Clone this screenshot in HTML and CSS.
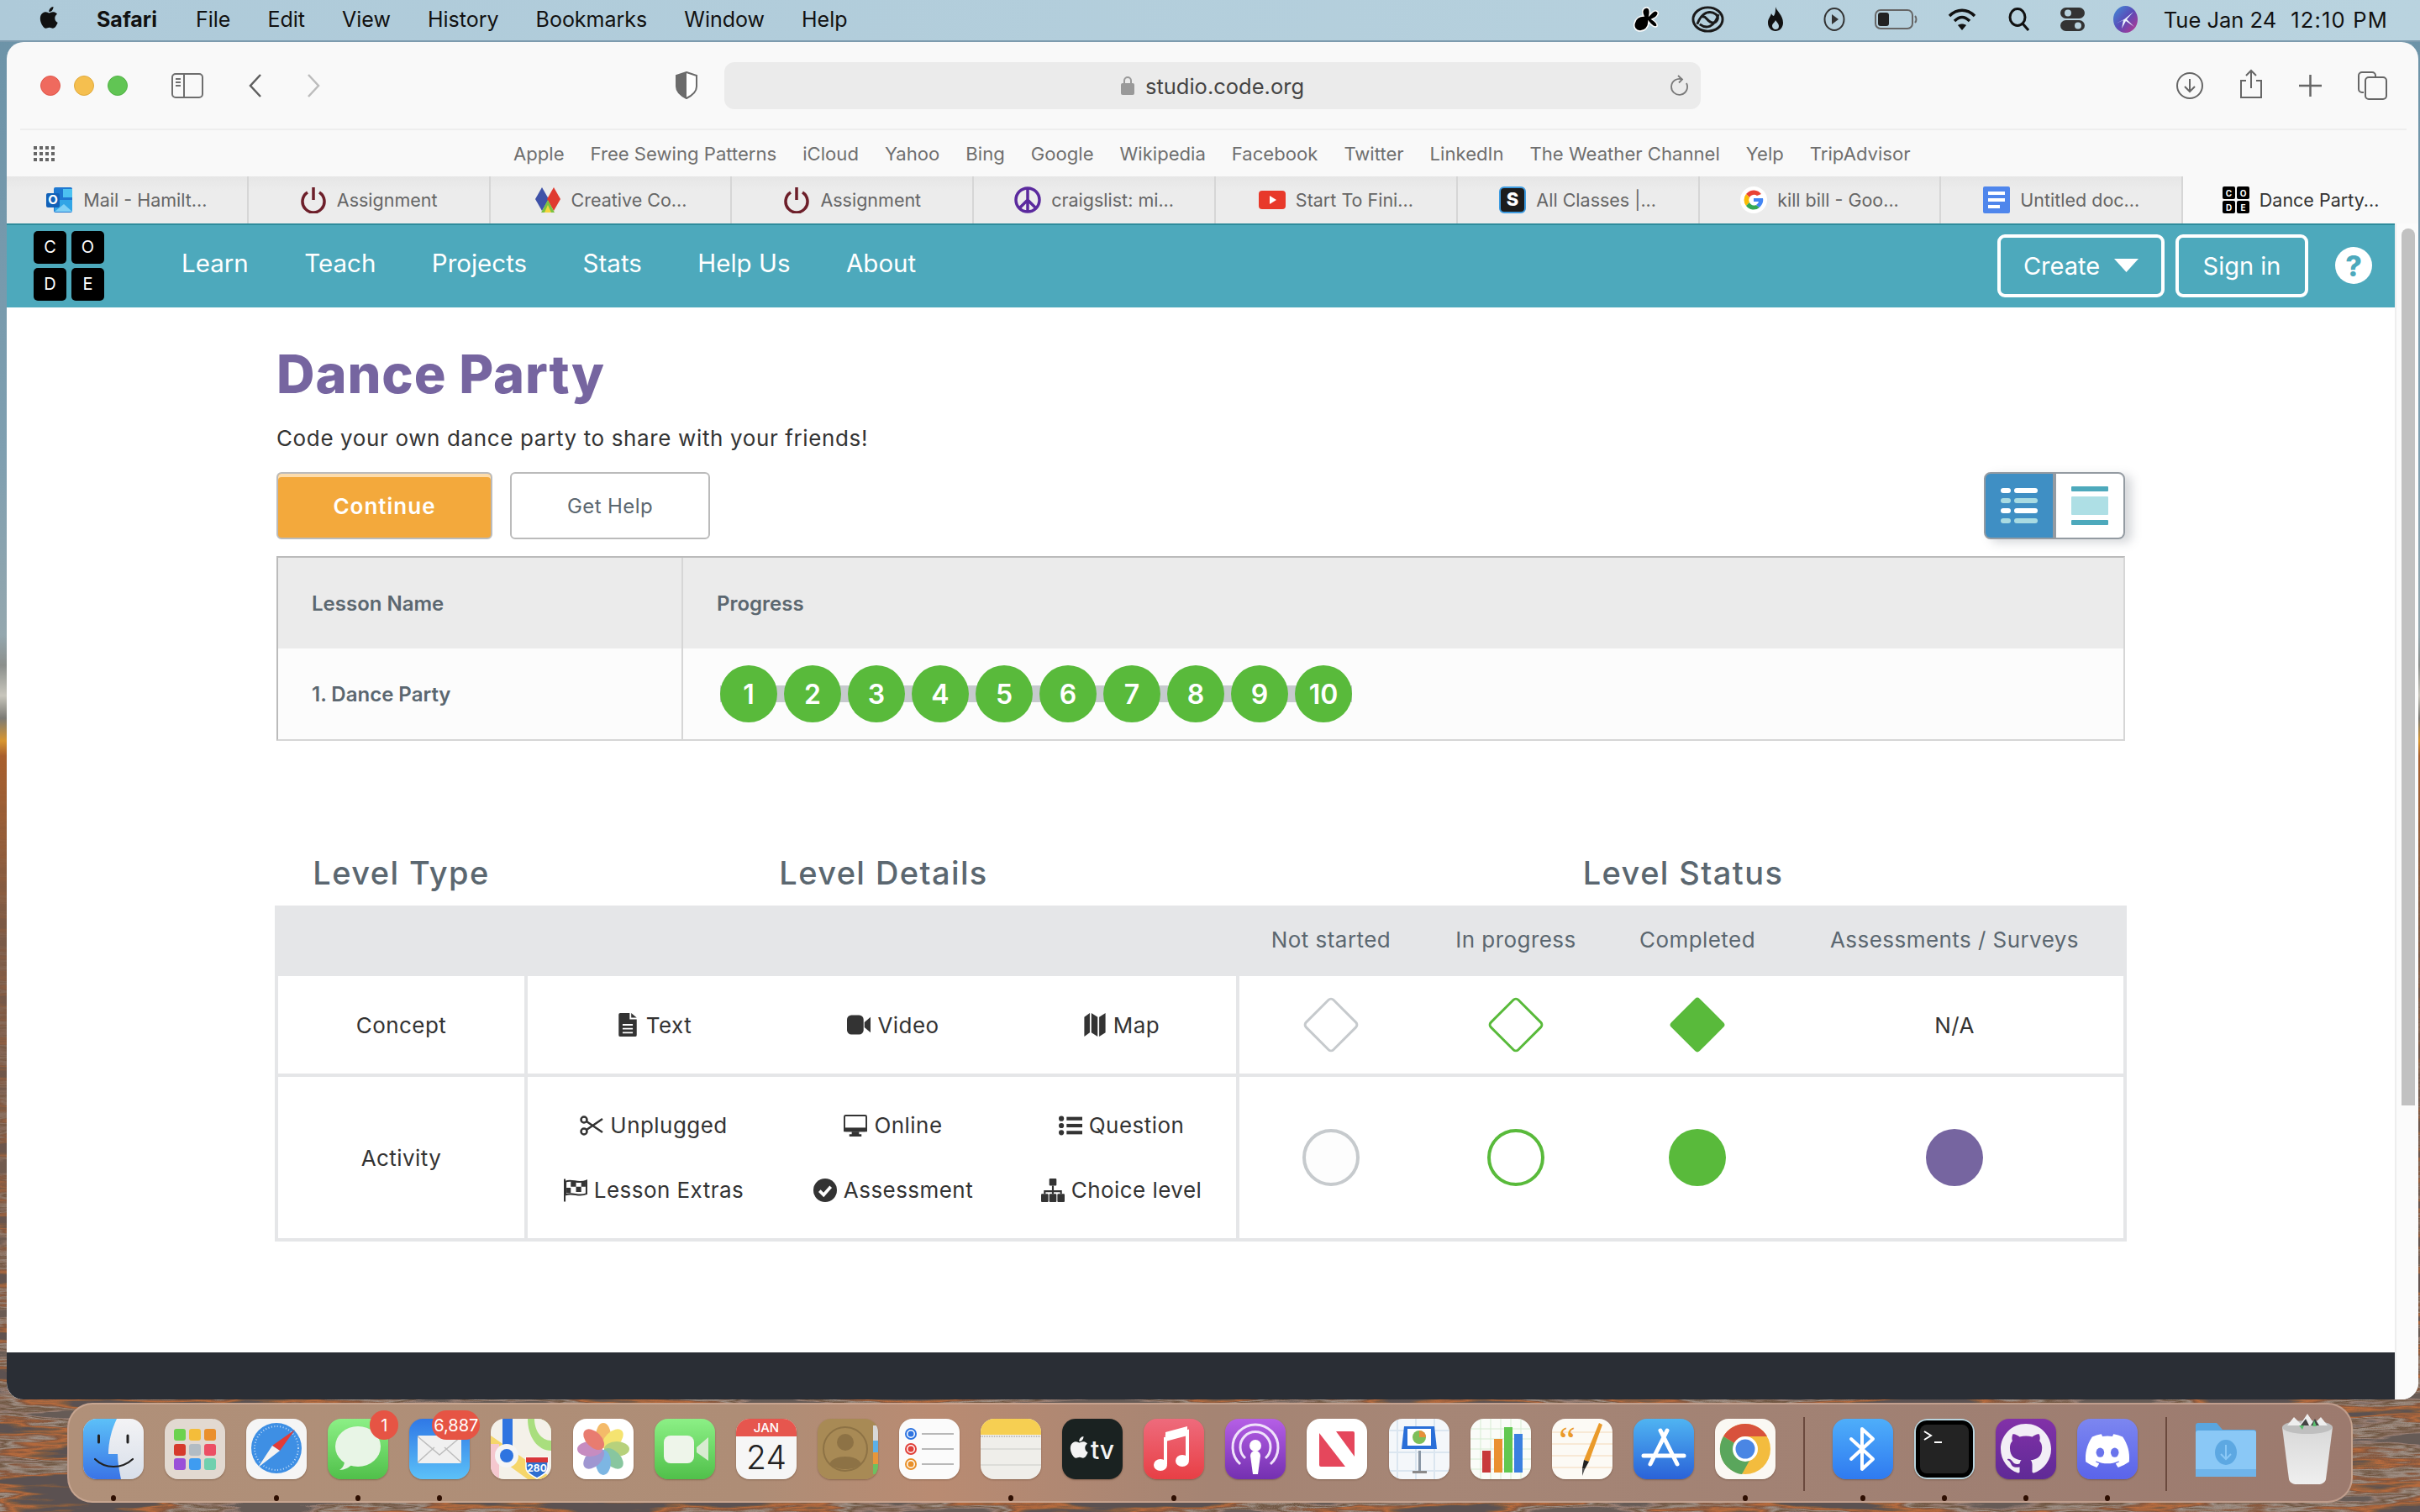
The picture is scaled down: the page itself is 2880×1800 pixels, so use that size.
FILE: index.html
```html
<!DOCTYPE html>
<html lang="en">
<head>
<meta charset="utf-8">
<title>Dance Party</title>
<link rel="stylesheet" href="styles.css">
</head>
<body>
<div class="desktop">
<svg class="wallpaper" width="2880" height="1800" aria-hidden="true">
  <defs>
    <filter id="rock" x="0" y="0" width="100%" height="100%" color-interpolation-filters="sRGB">
      <feTurbulence type="fractalNoise" baseFrequency="0.005 0.045" numOctaves="5" seed="11"/>
      <feColorMatrix type="matrix" values="3 0 0 0 -1  3 0 0 0 -1  3 0 0 0 -1  0 0 0 0 1"/>
      <feComponentTransfer>
        <feFuncR type="table" tableValues=".36 .50 .72 .52 .62 .44 .60 .40"/>
        <feFuncG type="table" tableValues=".32 .36 .42 .34 .56 .34 .50 .36"/>
        <feFuncB type="table" tableValues=".32 .26 .24 .24 .52 .26 .46 .34"/>
      </feComponentTransfer>
    </filter>
    <linearGradient id="sky" x1="0" y1="0" x2="0" y2="1">
      <stop offset="0" stop-color="#6b92a7"/><stop offset=".3" stop-color="#7f9fb0"/>
      <stop offset=".42" stop-color="#94a7ae"/><stop offset=".44" stop-color="#8b8f8c"/>
      <stop offset=".46" stop-color="#c8c6bc"/><stop offset=".475" stop-color="#7b7a74"/>
      <stop offset=".49" stop-color="#d8952f"/><stop offset=".5" stop-color="#a85f2d"/>
      <stop offset=".62" stop-color="#7d5a45" stop-opacity=".85"/><stop offset=".8" stop-color="#7d5a45" stop-opacity=".4"/>
      <stop offset=".93" stop-color="#7d5a45" stop-opacity="0"/>
    </linearGradient>
    <linearGradient id="gFinder" x1="0" y1="0" x2="0" y2="1"><stop offset="0" stop-color="#5cc0f8"/><stop offset="1" stop-color="#3a74e6"/></linearGradient>
    <linearGradient id="gFinderR" x1="0" y1="0" x2="0" y2="1"><stop offset="0" stop-color="#f3f3f5"/><stop offset="1" stop-color="#d8dfea"/></linearGradient>
    <linearGradient id="gGreen" x1="0" y1="0" x2="0" y2="1"><stop offset="0" stop-color="#8cf086"/><stop offset="1" stop-color="#50c04a"/></linearGradient>
    <linearGradient id="gMail" x1="0" y1="0" x2="0" y2="1"><stop offset="0" stop-color="#2f78e6"/><stop offset="1" stop-color="#5cc1f8"/></linearGradient>
    <linearGradient id="gMusic" x1="0" y1="0" x2="0" y2="1"><stop offset="0" stop-color="#ee6b7c"/><stop offset="1" stop-color="#e83f45"/></linearGradient>
    <linearGradient id="gPod" x1="0" y1="0" x2="0" y2="1"><stop offset="0" stop-color="#b55fe6"/><stop offset="1" stop-color="#7430b0"/></linearGradient>
    <linearGradient id="gApp" x1="0" y1="0" x2="0" y2="1"><stop offset="0" stop-color="#4fb4f2"/><stop offset="1" stop-color="#2a62d8"/></linearGradient>
    <linearGradient id="gBt" x1="0" y1="0" x2="0" y2="1"><stop offset="0" stop-color="#4eaefa"/><stop offset="1" stop-color="#2f7af0"/></linearGradient>
    <linearGradient id="gGit" x1="0" y1="0" x2="0" y2="1"><stop offset="0" stop-color="#8231a8"/><stop offset="1" stop-color="#5f2a96"/></linearGradient>
    <linearGradient id="gDisc" x1="0" y1="0" x2="0" y2="1"><stop offset="0" stop-color="#7c86f0"/><stop offset="1" stop-color="#5a64ea"/></linearGradient>
    <linearGradient id="gTrash" x1="0" y1="0" x2="0" y2="1"><stop offset="0" stop-color="#d8d8d8"/><stop offset="1" stop-color="#efefef"/></linearGradient>
    <linearGradient id="gSiri" x1="0" y1="0" x2="1" y2="1"><stop offset="0" stop-color="#3f8fd8"/><stop offset=".5" stop-color="#5a4bb8"/><stop offset="1" stop-color="#c0348c"/></linearGradient>
  </defs>
  <rect width="2880" height="1800" filter="url(#rock)"/>
  <rect width="2880" height="1800" fill="url(#sky)"/>
</svg>

<header class="menubar">
  <svg class="apple" viewBox="0 0 24 24"><path d="M17.05 12.54c-.03-2.6 2.12-3.85 2.22-3.91-1.21-1.77-3.09-2.01-3.76-2.04-1.6-.16-3.12.94-3.93.94-.81 0-2.06-.92-3.39-.89-1.74.03-3.35 1.01-4.25 2.57-1.81 3.14-.46 7.8 1.3 10.35.86 1.25 1.89 2.65 3.24 2.6 1.3-.05 1.79-.84 3.36-.84 1.57 0 2.01.84 3.38.81 1.4-.02 2.28-1.27 3.14-2.52.99-1.45 1.4-2.85 1.42-2.92-.03-.01-2.72-1.04-2.73-4.15zM14.5 4.9c.72-.87 1.2-2.08 1.07-3.28-1.03.04-2.28.69-3.02 1.55-.66.77-1.24 2-1.09 3.18 1.15.09 2.32-.58 3.04-1.45z"/></svg>
  <nav class="menus">
    <span class="menu-app">Safari</span><span>File</span><span>Edit</span><span>View</span><span>History</span><span>Bookmarks</span><span>Window</span><span>Help</span>
  </nav>
  <div class="status">
    <svg class="st st-splash" viewBox="0 0 33 30"><path d="M15 1c4-1 5 4 4 9 2-2 5-6 8-5 4 1 2 5 0 7-1 1-3 2-5 3 3 2 7 5 6 8-2 3-7-1-10-5 0 6-4 11-10 11-6 0-8-5-7-9 1-6 6-9 11-9-2-4-2-9 3-10z" fill="#000" stroke="#fff" stroke-width="1.500"/></svg>
    <svg class="st st-cc" viewBox="0 0 40 32" fill="none" stroke="#1a1a1a" stroke-width="3"><ellipse cx="20" cy="16" rx="18" ry="14.500"/><path d="M7 22C12 8 22 4 30 10c5 5 0 11-5 10-6-1-7-9-12-7M33 10C28 26 18 28 10 22"/></svg>
    <svg class="st st-flame" viewBox="0 0 22 30"><path fill="#111" d="M11 0c1 5 9 10 9 19 0 6-4 10-9 10s-9-4-9-10c0-5 3-7 4-11 1 2 2 3 3 3 2-3 2-7 2-11z"/><path d="M11 16c1 2 4 4 4 7 0 3-2 4-4 4s-4-2-4-4c0-3 3-4 4-7z" fill="#b7d1dd"/></svg>
    <svg class="st st-play" viewBox="0 0 26 30" fill="none"><ellipse cx="13" cy="15" rx="11.500" ry="13" stroke="#333" stroke-width="2"/><path d="M10 9l8 6-8 6z" fill="#333"/></svg>
    <svg class="st st-batt" viewBox="0 0 51 26" fill="none"><rect x="1" y="2" width="44" height="22" rx="6" stroke="#666" stroke-width="2"/><rect x="4" y="5" width="13" height="16" rx="3" fill="#222"/><path d="M48 9c2 2 2 6 0 8" stroke="#666" stroke-width="2"/></svg>
    <svg class="st st-wifi" viewBox="0 0 34 26" fill="none" stroke="#111" stroke-width="3.500"><path d="M2 9c9-9 21-9 30 0M8 15c6-6 12-6 18 0"/><path d="M17 26l-5-6c3-2 7-2 10 0z" fill="#111" stroke="none"/></svg>
    <svg class="st st-search" viewBox="0 0 25 28" fill="none" stroke="#111" stroke-width="3"><ellipse cx="11" cy="11.500" rx="9" ry="10"/><path d="M17 19l7 8"/></svg>
    <svg class="st st-ctrl" viewBox="0 0 29 28"><rect width="29" height="13" rx="6.500" fill="#333"/><circle cx="9" cy="6.500" r="4" fill="#b7d1dd"/><rect y="15" width="29" height="13" rx="6.500" fill="#333"/><circle cx="21" cy="21.500" r="4" fill="#b7d1dd"/></svg>
    <svg class="st st-siri" viewBox="0 0 29 32"><ellipse cx="14.500" cy="16" rx="14.500" ry="16" fill="url(#gSiri)"/><path d="M3 21L13 16 24 7 16 16 25 25 15 18 10 27 12 17z" fill="#eef5ff"/></svg>
    <span class="clock-date">Tue Jan 24</span><span class="clock-time">12:10 PM</span>
  </div>
</header>

<main class="window">
  <div class="toolbar">
    <span class="light light-r"></span><span class="light light-y"></span><span class="light light-g"></span>
    <svg class="tb tb-side" viewBox="0 0 38 30" fill="none" stroke="#6e6e6e" stroke-width="2"><rect x="1" y="1" width="36" height="28" rx="4"/><path d="M15 1v28M5 7h6M5 11h6M5 15h6"/></svg>
    <svg class="tb tb-back" viewBox="0 0 17 28" fill="none" stroke="#5f5f5f" stroke-width="2.500"><path d="M15 1L3 14l12 13"/></svg>
    <svg class="tb tb-fwd" viewBox="0 0 17 28" fill="none" stroke="#bcbcbc" stroke-width="2.500"><path d="M2 1l12 13L2 27"/></svg>
    <svg class="tb tb-shield" viewBox="0 0 28 33"><path d="M14 1l12 4v13c0 7-6 11-12 14C8 29 2 25 2 18V5z" fill="#fff" stroke="#6b6b6b" stroke-width="2"/><path d="M14 1v31C8 29 2 25 2 18V5z" fill="#6b6b6b"/></svg>
    <div class="urlbar">
      <svg class="lock" viewBox="0 0 16 23"><path d="M4 10V6a4 4 0 018 0v4" fill="none" stroke="#999" stroke-width="2"/><rect y="9" width="16" height="14" rx="2" fill="#999"/></svg>
      <span class="url-text">studio.code.org</span>
      <svg class="reload" viewBox="0 0 22 25" fill="none" stroke="#7a7a7a" stroke-width="1.800"><path d="M14 5.500A9.500 9.500 0 1019 10"/><path d="M9 1l5 4.500-4 4"/></svg>
    </div>
    <svg class="tb tb-dl" viewBox="0 0 32 32" fill="none" stroke="#666" stroke-width="2"><circle cx="16" cy="16" r="15"/><path d="M16 8v15M10 17l6 6 6-6"/></svg>
    <svg class="tb tb-share" viewBox="0 0 28 36" fill="none" stroke="#666" stroke-width="2"><path d="M8 14H2v20h24V14h-6M14 23V2M8 8l6-6 6 6"/></svg>
    <svg class="tb tb-plus" viewBox="0 0 27 26" fill="none" stroke="#666" stroke-width="2.500"><path d="M13.500 0v26M0 13h27"/></svg>
    <svg class="tb tb-tabs" viewBox="0 0 35 34" fill="none" stroke="#666" stroke-width="2"><path d="M7 25H5a4 4 0 01-4-4V5a4 4 0 014-4h12a4 4 0 014 4v2"/><rect x="9" y="7" width="25" height="26" rx="4"/></svg>
  </div>
  <div class="bookmarks">
    <svg class="grid-ico" viewBox="0 0 26 18" fill="#666"><g id="gr"><rect width="4" height="4"/><rect x="7" width="4" height="4"/><rect x="14" width="4" height="4"/><rect x="21" width="4" height="4"/></g><use href="#gr" y="7"/><use href="#gr" y="14"/></svg>
    <a>Apple</a><a>Free Sewing Patterns</a><a>iCloud</a><a>Yahoo</a><a>Bing</a><a>Google</a><a>Wikipedia</a><a>Facebook</a><a>Twitter</a><a>LinkedIn</a><a>The Weather Channel</a><a>Yelp</a><a>TripAdvisor</a>
  </div>
  <div class="tabs">
    <div class="tab"><svg class="tab-ico" viewBox="0 0 32 32"><rect x="9" y="1" width="22" height="30" rx="2" fill="#1f78d1"/><rect x="20" y="3" width="11" height="10" fill="#4cc2f1"/><path d="M10 16h21v14H10z" fill="#31a5e6"/><path d="M10 30l11-9 10 9z" fill="#7fd0f5"/><rect y="8" width="16" height="17" rx="2" fill="#1261b8"/><text x="8" y="21" class="tab-o">O</text></svg><span>Mail - Hamilt...</span></div>
    <div class="tab"><svg class="tab-ico" viewBox="0 0 32 32" fill="none" stroke="#6d1f2a" stroke-width="3.500"><path d="M9 7a13 13 0 1014 0"/><path d="M16 1v15"/></svg><span>Assignment</span></div>
    <div class="tab"><svg class="tab-ico" viewBox="0 0 32 32"><path d="M9 1l8 14-8 14L1 15z" fill="#3f52a8"/><path d="M23 1l8 14-8 14-8-14z" fill="#e03a30"/><path d="M16 16l8 15H8z" fill="#7cc242"/><path d="M16 22l4 9h-8z" fill="#f6d53c"/></svg><span>Creative Co...</span></div>
    <div class="tab"><svg class="tab-ico" viewBox="0 0 32 32" fill="none" stroke="#6d1f2a" stroke-width="3.500"><path d="M9 7a13 13 0 1014 0"/><path d="M16 1v15"/></svg><span>Assignment</span></div>
    <div class="tab"><svg class="tab-ico" viewBox="0 0 32 32" fill="none" stroke="#5b2a9e" stroke-width="3.500"><circle cx="16" cy="16" r="14"/><path d="M16 2v28M16 16L6 26M16 16l10 10"/></svg><span>craigslist: mi...</span></div>
    <div class="tab"><svg class="tab-ico" viewBox="0 0 32 32"><rect y="5" width="32" height="22" rx="4" fill="#e8392a"/><path d="M13 11l8 5-8 5z" fill="#fff"/></svg><span>Start To Fini...</span></div>
    <div class="tab"><svg class="tab-ico" viewBox="0 0 32 32"><rect x="1" y="1" width="30" height="30" rx="5" fill="#1c1c1c" stroke="#3d9be0" stroke-width="2"/><text x="16" y="23" class="tab-s">S</text></svg><span>All Classes |...</span></div>
    <div class="tab"><svg class="tab-ico" viewBox="0 0 32 32"><circle cx="16" cy="16" r="16" fill="#fff"/><path d="M25 9a11 11 0 00-17-1l-1 1 4 4a6 6 0 019-2z" fill="#e94335"/><path d="M7 9a11 11 0 000 14l4-4a6 6 0 010-6z" fill="#fbbc05"/><path d="M7 23a11 11 0 0016 2l-4-3a6 6 0 01-8-3z" fill="#34a853"/><path d="M27 14H16v4h6a6 6 0 01-3 4l4 3c3-3 5-7 4-11z" fill="#4285f4"/></svg><span>kill bill - Goo...</span></div>
    <div class="tab"><svg class="tab-ico" viewBox="0 0 32 32"><rect width="32" height="32" rx="2" fill="#4f86ec"/><rect x="6" y="6" width="20" height="4" fill="#fff"/><rect x="6" y="14" width="20" height="4" fill="#fff"/><rect x="6" y="22" width="14" height="4" fill="#fff"/></svg><span>Untitled doc...</span></div>
    <div class="tab tab-active"><svg class="tab-ico" viewBox="0 0 32 32"><rect width="15" height="15" rx="2"/><rect x="17" width="15" height="15" rx="2"/><rect y="17" width="15" height="15" rx="2"/><rect x="17" y="17" width="15" height="15" rx="2"/><text x="7.500" y="12" class="tab-c">C</text><text x="24.500" y="12" class="tab-c">O</text><text x="7.500" y="29" class="tab-c">D</text><text x="24.500" y="29" class="tab-c">E</text></svg><span>Dance Party...</span></div>
  </div>

  <div class="viewport">
    <div class="site">
      <div class="site-header">
        <div class="logo"><span>C</span><span>O</span><span>D</span><span>E</span></div>
        <nav class="site-nav"><a>Learn</a><a>Teach</a><a>Projects</a><a>Stats</a><a>Help Us</a><a>About</a></nav>
        <button class="hbtn hbtn-create">Create<svg class="caret" viewBox="0 0 29 16"><path d="M0 0h29L14.500 16z" fill="#fff"/></svg></button>
        <button class="hbtn hbtn-sign">Sign in</button>
        <div class="help">?</div>
      </div>
      <div class="site-body">
        <h1 class="title">Dance Party</h1>
        <p class="lead">Code your own dance party to share with your friends!</p>
        <div class="actions">
          <button class="btn btn-primary">Continue</button>
          <button class="btn btn-secondary">Get Help</button>
          <div class="toggle">
            <div class="toggle-a">
              <i class="d w"></i><i class="l w"></i><i class="d t"></i><i class="l t"></i><i class="d w"></i><i class="l w"></i><i class="d t"></i><i class="l t"></i>
            </div>
            <div class="toggle-b"><i class="bar"></i><i class="box"></i><i class="bar"></i></div>
          </div>
        </div>
        <div class="lessons">
          <div class="cell cell-head cell-name">Lesson Name</div>
          <div class="cell cell-head cell-prog">Progress</div>
          <div class="cell cell-row cell-name">1. Dance Party</div>
          <div class="cell cell-row cell-prog">
            <div class="bubbles"><span>1</span><span>2</span><span>3</span><span>4</span><span>5</span><span>6</span><span>7</span><span>8</span><span>9</span><span>10</span></div>
          </div>
        </div>
        <div class="legend-titles"><h2>Level Type</h2><h2>Level Details</h2><h2>Level Status</h2></div>
        <div class="legend">
          <div class="lg-head">
            <div class="status-grid lg-status-head"><span>Not started</span><span>In progress</span><span>Completed</span><span>Assessments / Surveys</span></div>
          </div>
          <div class="lg-cell">Concept</div>
          <div class="lg-cell details">
            <div class="item"><svg class="fa" viewBox="0 0 23 30"><path d="M0 2a2 2 0 012-2h12v8h9v20a2 2 0 01-2 2H2a2 2 0 01-2-2zM16 0l7 6h-7z" fill="#333"/><path d="M5 14h13v2H5zM5 19h13v2H5zM5 24h13v2H5z" fill="#fff"/></svg>Text</div>
            <div class="item"><svg class="fa" viewBox="0 0 27 24"><rect y="1" width="19" height="22" rx="5" fill="#333"/><path d="M20 9l7-6v18l-7-6z" fill="#333"/></svg>Video</div>
            <div class="item"><svg class="fa" viewBox="0 0 27 30"><path d="M0 5l7-5v25l-7 5zM9 0l8 5v25l-8-5zM19 5l8-5v25l-8 5z" fill="#333"/></svg>Map</div>
          </div>
          <div class="status-grid">
            <svg class="mark" viewBox="0 0 68 68"><rect x="11" y="11" width="46" height="46" rx="4" transform="rotate(45 34 34)" fill="#fff" stroke="#c6cacd" stroke-width="3"/></svg>
            <svg class="mark" viewBox="0 0 68 68"><rect x="11" y="11" width="46" height="46" rx="4" transform="rotate(45 34 34)" fill="#fff" stroke="#59ba3b" stroke-width="3"/></svg>
            <svg class="mark" viewBox="0 0 68 68"><rect x="10" y="10" width="48" height="48" rx="4" transform="rotate(45 34 34)" fill="#59ba3b"/></svg>
            <span class="na">N/A</span>
          </div>
          <div class="lg-cell">Activity</div>
          <div class="lg-cell details">
            <div class="item"><svg class="fa" viewBox="0 0 28 24" fill="none" stroke="#333" stroke-width="2.500"><circle cx="5" cy="5" r="3.500"/><circle cx="5" cy="19" r="3.500"/><path d="M8 7l19 13M8 17L27 4"/></svg>Unplugged</div>
            <div class="item"><svg class="fa" viewBox="0 0 29 27"><rect x="1" y="1" width="27" height="19" rx="1.500" fill="#fff" stroke="#333" stroke-width="2"/><rect y="16" width="29" height="5" fill="#333"/><path d="M10 21h9v3h3v3H7v-3h3z" fill="#333"/></svg>Online</div>
            <div class="item"><svg class="fa" viewBox="0 0 27 24" fill="#333"><circle cx="3" cy="4" r="3"/><circle cx="3" cy="12" r="3"/><circle cx="3" cy="20" r="3"/><rect x="9" y="2" width="18" height="4"/><rect x="9" y="10" width="18" height="4"/><rect x="9" y="18" width="18" height="4"/></svg>Question</div>
            <div class="item"><svg class="fa" viewBox="0 0 27 26"><path d="M1 0v26" stroke="#333" stroke-width="2"/><path d="M2 3c8-3 14 3 24-1v15c-9 4-15-2-24 1z" fill="#fff" stroke="#333" stroke-width="2"/><path d="M8 3h6v6H8zM14 9h6v6h-6zM20 3h5v6h-5zM3 10h5v6H3z" fill="#333"/></svg>Lesson Extras</div>
            <div class="item"><svg class="fa" viewBox="0 0 23 23"><circle cx="11.500" cy="11.500" r="11.500" fill="#333"/><path d="M6 12l4 4 7-8" fill="none" stroke="#fff" stroke-width="3"/></svg>Assessment</div>
            <div class="item"><svg class="fa" viewBox="0 0 26 26" fill="#333"><rect x="9" width="8" height="8" rx="1"/><path d="M12 8h2v5h9v4h-2v-2h-7v2h-2v-2H5v2H3v-4h9z"/><rect y="17" width="8" height="9" rx="1"/><rect x="9" y="17" width="8" height="9" rx="1"/><rect x="18" y="17" width="8" height="9" rx="1"/></svg>Choice level</div>
          </div>
          <div class="status-grid">
            <span class="dotm dotm-empty"></span><span class="dotm dotm-prog"></span><span class="dotm dotm-done"></span><span class="dotm dotm-assess"></span>
          </div>
        </div>
      </div>
      <div class="site-footer"></div>
    </div>
    <div class="scrollbar"><div class="thumb"></div></div>
  </div>
</main>

<footer class="dock">
  <div class="di"><div class="ico"><svg viewBox="0 0 72 72"><rect width="72" height="72" fill="url(#gFinderR)"/><path d="M0 0h40C34 12 30 28 30 42h11c0 10 2 20 4 30H0z" fill="url(#gFinder)"/><path d="M18.500 20v8M53 20v8" stroke="#222" stroke-width="3" stroke-linecap="round"/><path d="M14 48c12 12 32 12 45 0" fill="none" stroke="#222" stroke-width="2.200" stroke-linecap="round"/></svg></div><i class="dot"></i></div>
  <div class="di"><div class="ico"><svg viewBox="0 0 72 72"><rect width="72" height="72" fill="#e2d9d1"/><rect x="11" y="12" width="14" height="14" rx="3" fill="#6cd24e"/><rect x="29" y="12" width="14" height="14" rx="3" fill="#f4bd3a"/><rect x="47" y="12" width="14" height="14" rx="3" fill="#ea8f2c"/><rect x="11" y="30" width="14" height="14" rx="3" fill="#d63a2c"/><rect x="29" y="30" width="14" height="14" rx="3" fill="#b2bcc4"/><rect x="47" y="30" width="14" height="14" rx="3" fill="#ec4f64"/><rect x="11" y="47" width="14" height="14" rx="3" fill="#9a4fd8"/><rect x="29" y="47" width="14" height="14" rx="3" fill="#3f9cf0"/><rect x="47" y="47" width="14" height="14" rx="3" fill="#6fd0ae"/></svg></div></div>
  <div class="di"><div class="ico"><svg viewBox="0 0 72 72"><rect width="72" height="72" fill="#f5f5f5"/><circle cx="36" cy="35" r="30" fill="#3e8fe4"/><circle cx="36" cy="35" r="26" fill="none" stroke="#bcd9f6" stroke-width="2" stroke-dasharray="1 2.500"/><path d="M58 13L31 32l9 6z" fill="#e33b36"/><path d="M14 58l26-20-9-6z" fill="#f3f3f3"/></svg></div><i class="dot"></i></div>
  <div class="di"><div class="ico"><svg viewBox="0 0 72 72"><rect width="72" height="72" fill="url(#gGreen)"/><ellipse cx="36" cy="33" rx="27" ry="24" fill="#e8f5e6"/><path d="M20 50c0 6-3 9-6 11 6 0 12-3 15-7z" fill="#e8f5e6"/></svg></div><i class="dot"></i><span class="badge badge-msg">1</span></div>
  <div class="di"><div class="ico"><svg viewBox="0 0 72 72"><rect width="72" height="72" fill="url(#gMail)"/><rect x="10" y="20" width="52" height="33" rx="2" fill="#f0f0f0"/><path d="M10 52l20-18M62 52L42 34M10 21l26 22 26-22" fill="none" stroke="#bdbdbd" stroke-width="1.500"/></svg></div><i class="dot"></i><span class="badge badge-mail">6,887</span></div>
  <div class="di"><div class="ico"><svg viewBox="0 0 72 72"><rect width="72" height="72" fill="#f4f1e9"/><path d="M44 0h28v38C56 38 44 22 44 0z" fill="#a9de7e"/><path d="M52 0h20v26C60 26 52 14 52 0z" fill="#f4f1e9"/><path d="M0 20l72 50v2H44L0 40z" fill="#f5d66a"/><path d="M0 30h10v42H0z" fill="#f5c8cf"/><path d="M14 0h12v42H14z" fill="#2f74e0"/><circle cx="19" cy="44" r="14" fill="#f5f5f5"/><circle cx="19" cy="44" r="8" fill="#2f74e0"/><path d="M42 46h26v12c0 6-6 9-13 13-7-4-13-7-13-13z" fill="#2f6fd0" stroke="#fff" stroke-width="1.500"/><rect x="42" y="46" width="26" height="6" fill="#d8363a"/><text x="55" y="63" class="ic-280">280</text></svg></div></div>
  <div class="di"><div class="ico"><svg viewBox="0 0 72 72"><rect width="72" height="72" fill="#fff"/><g opacity=".72"><ellipse cx="36" cy="20" rx="9" ry="15" fill="#f0a030"/><ellipse cx="36" cy="20" rx="9" ry="15" fill="#f2d93a" transform="rotate(45 36 36)"/><ellipse cx="36" cy="20" rx="9" ry="15" fill="#9cc04a" transform="rotate(90 36 36)"/><ellipse cx="36" cy="20" rx="9" ry="15" fill="#5ab07a" transform="rotate(135 36 36)"/><ellipse cx="36" cy="20" rx="9" ry="15" fill="#4b9ad8" transform="rotate(180 36 36)"/><ellipse cx="36" cy="20" rx="9" ry="15" fill="#7a6ec0" transform="rotate(225 36 36)"/><ellipse cx="36" cy="20" rx="9" ry="15" fill="#b060a8" transform="rotate(270 36 36)"/><ellipse cx="36" cy="20" rx="9" ry="15" fill="#e04a3a" transform="rotate(315 36 36)"/></g></svg></div></div>
  <div class="di"><div class="ico"><svg viewBox="0 0 72 72"><rect width="72" height="72" fill="url(#gGreen)"/><rect x="11" y="20" width="36" height="33" rx="8" fill="#eef5ea"/><path d="M50 34l14-12v28L50 40z" fill="#d8ebd2"/></svg></div></div>
  <div class="di"><div class="ico"><svg viewBox="0 0 72 72"><rect width="72" height="72" fill="#f6f6f6"/><rect width="72" height="21" fill="#e6564e"/><text x="36" y="16" class="ic-jan">JAN</text><text x="36" y="60" class="ic-24">24</text></svg></div></div>
  <div class="di"><div class="ico"><svg viewBox="0 0 72 72"><rect width="72" height="72" fill="#a88a55"/><rect x="66" y="8" width="6" height="18" fill="#d8d8d8"/><rect x="66" y="26" width="6" height="14" fill="#5cb0e8"/><rect x="66" y="40" width="6" height="14" fill="#e8963a"/><rect x="66" y="54" width="6" height="12" fill="#6cc060"/><circle cx="33" cy="36" r="26" fill="none" stroke="#8d7245" stroke-width="2"/><circle cx="33" cy="28" r="10" fill="#8d7245"/><path d="M14 54c4-12 34-12 38 0-10 8-28 8-38 0z" fill="#8d7245"/></svg></div></div>
  <div class="di"><div class="ico"><svg viewBox="0 0 72 72"><rect width="72" height="72" fill="#fbfbfb"/><circle cx="14" cy="18" r="6" fill="#fff" stroke="#2f74e0" stroke-width="2"/><circle cx="14" cy="18" r="3.500" fill="#2f74e0"/><circle cx="14" cy="36" r="6" fill="#fff" stroke="#e0403a" stroke-width="2"/><circle cx="14" cy="36" r="3.500" fill="#e0403a"/><circle cx="14" cy="54" r="6" fill="#fff" stroke="#e8902a" stroke-width="2"/><circle cx="14" cy="54" r="3.500" fill="#e8902a"/><path d="M27 18h38M27 36h38M27 54h38" stroke="#b8b8b8" stroke-width="2"/></svg></div></div>
  <div class="di"><div class="ico"><svg viewBox="0 0 72 72"><rect width="72" height="72" fill="#efeeea"/><rect width="72" height="19" fill="#f6cf52"/><path d="M0 21h72" stroke="#bcbcbc" stroke-width="2" stroke-dasharray="1 1"/><path d="M0 36h72M0 55h72" stroke="#d6d6d2" stroke-width="1.500"/></svg></div><i class="dot"></i></div>
  <div class="di"><div class="ico"><svg viewBox="0 0 72 72"><rect width="72" height="72" fill="#1a2221"/><path transform="translate(6 19) scale(1.250)" fill="#f4f4f4" d="M17.050 12.540c-.03-2.600 2.120-3.850 2.220-3.910-1.210-1.770-3.090-2.010-3.760-2.040-1.600-.16-3.120.94-3.930.94-.81 0-2.060-.92-3.390-.89-1.740.03-3.350 1.010-4.250 2.570-1.810 3.140-.46 7.800 1.300 10.350.86 1.250 1.890 2.650 3.240 2.600 1.300-.05 1.790-.84 3.360-.84 1.570 0 2.010.84 3.380.81 1.400-.02 2.280-1.270 3.140-2.520.99-1.450 1.400-2.850 1.420-2.920-.03-.01-2.720-1.040-2.730-4.150zM14.500 4.900c.72-.87 1.200-2.080 1.070-3.280-1.030.04-2.280.69-3.020 1.550-.66.77-1.240 2-1.090 3.180 1.150.09 2.320-.58 3.040-1.450z"/><text x="34" y="48" class="ic-tv">tv</text></svg></div></div>
  <div class="di"><div class="ico"><svg viewBox="0 0 72 72"><rect width="72" height="72" fill="url(#gMusic)"/><path d="M26 22l26-7v34" fill="none" stroke="#fff" stroke-width="4"/><path d="M26 22v32" fill="none" stroke="#fff" stroke-width="4"/><path d="M26 16l26-7v11l-26 7z" fill="#fff"/><ellipse cx="20" cy="55" rx="8" ry="7" fill="#fff"/><ellipse cx="46" cy="50" rx="8" ry="7" fill="#fff"/></svg></div><i class="dot"></i></div>
  <div class="di"><div class="ico"><svg viewBox="0 0 72 72"><rect width="72" height="72" fill="url(#gPod)"/><g fill="none" stroke="#f0e2fb" stroke-width="3"><path d="M18 54a27 27 0 1136 0"/><path d="M24 47a18 18 0 1124 0"/></g><circle cx="36" cy="32" r="7" fill="#fff"/><path d="M30 44a6 6 0 0112 0l-3 22h-6z" fill="#fff"/></svg></div></div>
  <div class="di"><div class="ico"><svg viewBox="0 0 72 72"><rect width="72" height="72" fill="#fff"/><rect x="15" y="15" width="42" height="42" rx="2" fill="#e5475c"/><path d="M24 15h11l22 30v12H46L15 17v-2z" fill="#fff"/></svg></div></div>
  <div class="di"><div class="ico"><svg viewBox="0 0 72 72"><rect width="72" height="72" fill="#f4f7fa"/><path d="M0 14h72M0 40h72M0 62h72M10 0v72M32 0v72M54 0v72" stroke="#dbe6f0" stroke-width="2"/><path d="M18 9h36l3 27H15z" fill="#2a6fd8"/><rect x="22" y="12" width="28" height="20" fill="#fff"/><circle cx="36" cy="22" r="8" fill="#7dbf5a"/><path d="M36 22V14a8 8 0 018 8z" fill="#e8903a"/><path d="M35 38h3v24h-3z" fill="#8a97a5"/><rect x="28" y="62" width="17" height="3" fill="#8a8a8a"/></svg></div></div>
  <div class="di"><div class="ico"><svg viewBox="0 0 72 72"><rect width="72" height="72" fill="#fafcf8"/><path d="M0 12h72M0 24h72M0 36h72M0 48h72M0 60h72M12 0v72M24 0v72M36 0v72M48 0v72M60 0v72" stroke="#d6ecd2" stroke-width="1"/><rect x="14" y="38" width="10" height="26" fill="#c83a3a"/><rect x="28" y="24" width="10" height="40" fill="#ea9030"/><rect x="40" y="10" width="10" height="54" fill="#62c850"/><rect x="52" y="18" width="10" height="46" fill="#3a80e0"/></svg></div></div>
  <div class="di"><div class="ico"><svg viewBox="0 0 72 72"><rect width="72" height="72" fill="#fcfaf5"/><path d="M0 16h72M0 30h72M0 44h72M0 58h72" stroke="#f6e3cc" stroke-width="1.500"/><text x="18" y="40" class="ic-quote">“</text><path d="M56 5l4 2-16 44-6-2z" fill="#ea9a2a"/><path d="M38 49l6 2-5 9-3-1z" fill="#222"/><path d="M36 59l3 1-3 8z" fill="#555"/></svg></div></div>
  <div class="di"><div class="ico"><svg viewBox="0 0 72 72"><rect width="72" height="72" fill="url(#gApp)"/><g stroke="#fff" stroke-width="5" stroke-linecap="round" fill="none"><path d="M32 14l20 40M40 14L20 54M12 44h48"/></g></svg></div></div>
  <div class="di"><div class="ico"><svg viewBox="0 0 72 72"><rect width="72" height="72" fill="#faf8f3"/><circle cx="36" cy="36" r="30" fill="#f3bc3e"/><path d="M10 21A30 30 0 0162 21H36a15 15 0 00-13 8z" fill="#d8523c"/><path d="M10 21a30 30 0 0022 45l10-18a15 15 0 01-19-19z" fill="#5aa65c"/><circle cx="36" cy="36" r="15" fill="#fff"/><circle cx="36" cy="36" r="11.500" fill="#4a86e4"/></svg></div><i class="dot"></i></div>
  <i class="dock-sep"></i>
  <div class="di"><div class="ico"><svg viewBox="0 0 72 72"><rect width="72" height="72" fill="url(#gBt)"/><path d="M22 24l26 24-13 12V12l13 12-26 24" fill="none" stroke="#fff" stroke-width="4" stroke-linejoin="round" stroke-linecap="round"/></svg></div><i class="dot"></i></div>
  <div class="di"><div class="ico"><svg viewBox="0 0 72 72"><rect width="72" height="72" rx="14" fill="#b8d4de"/><rect x="2" y="2" width="68" height="68" rx="13" fill="#000"/><rect x="7" y="7" width="58" height="58" rx="8" fill="#232323"/><path d="M12 15l8 5-8 5" fill="none" stroke="#fff" stroke-width="2"/><path d="M24 28h9" stroke="#fff" stroke-width="2"/></svg></div><i class="dot"></i></div>
  <div class="di"><div class="ico"><svg viewBox="0 0 72 72"><rect width="72" height="72" fill="url(#gGit)"/><g transform="translate(6 6) scale(3.750)"><path fill="#f2eef6" d="M8 0C3.580 0 0 3.580 0 8c0 3.540 2.290 6.530 5.470 7.590.4.070.55-.17.55-.38 0-.19-.01-.82-.01-1.490-2.010.37-2.530-.49-2.690-.94-.09-.23-.48-.94-.82-1.130-.28-.15-.68-.52-.01-.53.63-.01 1.080.58 1.230.82.72 1.210 1.870.87 2.330.66.07-.52.28-.87.51-1.070-1.780-.2-3.640-.89-3.640-3.950 0-.87.31-1.590.82-2.150-.08-.2-.36-1.020.08-2.120 0 0 .67-.21 2.200.82.64-.18 1.320-.27 2-.27.68 0 1.360.09 2 .27 1.530-1.040 2.200-.82 2.200-.82.44 1.100.16 1.920.08 2.120.51.56.82 1.270.82 2.150 0 3.070-1.870 3.750-3.650 3.950.29.25.54.73.54 1.480 0 1.070-.01 1.930-.01 2.200 0 .21.15.46.55.38A8.013 8.013 0 0016 8c0-4.420-3.580-8-8-8z"/></g></svg></div><i class="dot"></i></div>
  <div class="di"><div class="ico"><svg viewBox="0 0 72 72"><rect width="72" height="72" fill="url(#gDisc)"/><g transform="translate(10 12) scale(2.170)"><path fill="#fff" d="M20.317 4.370a19.791 19.791 0 0 0-4.885-1.515.074.074 0 0 0-.079.037c-.21.375-.444.864-.608 1.250a18.270 18.270 0 0 0-5.487 0 12.640 12.640 0 0 0-.617-1.250.077.077 0 0 0-.079-.037A19.736 19.736 0 0 0 3.677 4.370a.07.07 0 0 0-.032.027C.533 9.046-.32 13.580.099 18.057a.082.082 0 0 0 .031.057 19.900 19.900 0 0 0 5.993 3.030.078.078 0 0 0 .084-.028 14.090 14.090 0 0 0 1.226-1.994.076.076 0 0 0-.041-.106 13.107 13.107 0 0 1-1.872-.892.077.077 0 0 1-.008-.128 10.200 10.200 0 0 0 .372-.292.074.074 0 0 1 .077-.01c3.928 1.793 8.180 1.793 12.062 0a.074.074 0 0 1 .078.01c.12.098.246.198.373.292a.077.077 0 0 1-.006.127 12.299 12.299 0 0 1-1.873.892.077.077 0 0 0-.041.107c.36.698.772 1.362 1.225 1.993a.076.076 0 0 0 .084.028 19.839 19.839 0 0 0 6.002-3.030.077.077 0 0 0 .032-.054c.5-5.177-.838-9.674-3.549-13.660a.061.061 0 0 0-.031-.03z"/><ellipse cx="8" cy="13" rx="2.200" ry="2.600" fill="#6a74ec"/><ellipse cx="16" cy="13" rx="2.200" ry="2.600" fill="#6a74ec"/></g></svg></div><i class="dot"></i></div>
  <i class="dock-sep"></i>
  <div class="di"><div class="ico ico-free"><svg viewBox="0 0 72 72"><path d="M0 8a3 3 0 013-3h22l7 8h37a3 3 0 013 3v10H0z" fill="#5aa6e0"/><rect y="14" width="72" height="55" rx="3" fill="#8ac8f6"/><rect y="60" width="72" height="9" fill="#6fb4ea"/><ellipse cx="36" cy="40" rx="13" ry="15" fill="#5da8e2"/><path d="M36 31v17M30 42l6 6 6-6" fill="none" stroke="#8ac8f6" stroke-width="2"/></svg></div></div>
  <div class="di"><div class="ico ico-free ico-trash"><svg viewBox="0 0 64 84"><path d="M2 16l8 62c1 4 5 6 9 6h26c4 0 8-2 9-6l8-62z" fill="url(#gTrash)"/><ellipse cx="32" cy="16" rx="30" ry="8" fill="#bfbfbf"/><path d="M8 14L16 4l8 8 8-12 8 12 8-8 8 10z" fill="#eee"/><path d="M24 14l6-8 4 8zM36 14l5-8 5 8z" fill="#444"/><path d="M22 14h6l-2 5zM40 8l3 7h-5z" fill="#5ac070"/></svg></div></div>
</footer>
</div>
</body>
</html>
```

FILE: styles.css
```css
* { box-sizing: border-box; }
html, body { margin: 0; padding: 0; width: 2880px; height: 1800px; overflow: hidden; }
body { font-family: "Inter", "Liberation Sans", sans-serif; color: #333; }
button { font-family: inherit; cursor: pointer; }
.desktop { position: relative; width: 2880px; height: 1800px; overflow: hidden; }
.wallpaper { position: absolute; left: 0; top: 0; z-index: 0; }

/* menu bar */
.menubar { position: relative; height: 50px; display: flex; align-items: center; padding-bottom: 2px; padding-left: 44px; background: linear-gradient(90deg, #aecad9, #b9d3df); border-bottom: 2px solid #7d9bae; color: #111; font-size: 26px; }
.apple { width: 30px; height: 36px; fill: #111; margin-top: -4px; }
.menus { display: flex; align-items: center; margin-left: 41px; gap: 44px; font-size: 25px; }
.menu-app { font-weight: 700; margin-right: 2px; }
.status { margin-left: auto; display: flex; align-items: center; height: 100%; padding-right: 38px; }
.st { flex: none; display: block; }
.st-splash { width: 33px; height: 30px; }
.st-cc { width: 39px; height: 32px; margin-left: 36px; }
.st-flame { width: 22px; height: 30px; margin-left: 50px; }
.st-play { width: 26px; height: 30px; margin-left: 46px; }
.st-batt { width: 51px; height: 26px; margin-left: 35px; }
.st-wifi { width: 34px; height: 26px; margin-left: 36px; }
.st-search { width: 25px; height: 28px; margin-left: 38px; }
.st-ctrl { width: 29px; height: 28px; margin-left: 37px; }
.st-siri { width: 29px; height: 32px; margin-left: 34px; }
.clock-date { margin-left: 31px; font-size: 25.500px; }
.clock-time { margin-left: 17px; font-size: 25.500px; letter-spacing: 1.200px; }

/* window */
.window { position: relative; margin-left: 8px; width: 2870px; height: 1616px; border-radius: 20px; overflow: hidden; background: #f9f9f9; display: flex; flex-direction: column; }
.toolbar { position: relative; height: 105px; flex: none; display: flex; align-items: center; margin: 0 14px 0 16px; border-bottom: 2px solid #eeeeee; }
.light { flex: none; width: 24px; height: 24px; border-radius: 50%; margin-right: 16px; }
.light-r { margin-left: 24px; background: #ef6a5e; border: 1px solid #e0564a; }
.light-y { background: #f5bf4f; border: 1px solid #e0aa3c; }
.light-g { background: #61c554; border: 1px solid #52b246; }
.tb { flex: none; display: block; }
.tb-side { width: 38px; height: 30px; margin-left: 36px; }
.tb-back { width: 17px; height: 28px; margin-left: 53px; }
.tb-fwd { width: 17px; height: 28px; margin-left: 53px; }
.tb-shield { width: 28px; height: 33px; margin-left: 421px; }
.urlbar { flex: none; position: relative; margin-left: 31px; width: 1162px; height: 56px; border-radius: 12px; background: #ebebeb; display: flex; align-items: center; justify-content: center; gap: 13px; }
.lock { width: 16px; height: 23px; }
.url-text { font-size: 25.500px; color: #444; padding-top: 2px; }
.reload { position: absolute; right: 14px; top: 15px; width: 22px; height: 25px; }
.tb-dl { width: 32px; height: 32px; margin-left: 566px; }
.tb-share { width: 28px; height: 36px; margin-left: 43px; margin-top: -4px; }
.tb-plus { width: 27px; height: 26px; margin-left: 43px; }
.tb-tabs { width: 35px; height: 34px; margin-left: 43px; }

.bookmarks { height: 55px; flex: none; display: flex; align-items: center; padding-left: 32px; font-size: 22.100px; color: #6f6f6f; gap: 31px; }
.grid-ico { width: 26px; height: 18px; margin-right: 514px; }

.tabs { height: 56px; flex: none; display: flex; box-shadow: inset 0 2px 2px -1px #c6c6c6; background: #ebebeb; }
.tab { flex: 0 0 287.800px; display: flex; align-items: center; justify-content: center; gap: 12px; font-size: 21.500px; color: #666; border-right: 2px solid #d6d6d6; background: linear-gradient(#e6e6e6, #ececec 30%); white-space: nowrap; }
.tab-active { flex: 1; background: #f9f9f9; border: 0; color: #333; }
.tab-ico { width: 32px; height: 32px; flex: none; }
.tab-o { font-size: 15px; font-weight: 700; fill: #fff; text-anchor: middle; }
.tab-s { font-size: 22px; font-weight: 800; fill: #fff; text-anchor: middle; }
.tab-c { font-size: 10px; font-weight: 700; fill: #fff; text-anchor: middle; }

/* viewport */
.viewport { flex: 1; display: flex; min-height: 0; }
.site { width: 2842px; flex: none; background: #fff; display: flex; flex-direction: column; }
.scrollbar { flex: 1; background: #fbfbfb; border-left: 2px solid #eeeeee; padding: 6px 4px 0 6px; }
.thumb { height: 1044px; width: 16px; border-radius: 8px 8px 0 0; background: #c1c1c1; }

.site-header { height: 100px; flex: none; display: flex; align-items: center; background: #4da9bc; border-top: 2px solid #2f8c9c; padding-left: 32px; color: #fff; }
.logo { display: grid; grid-template-columns: 39px 39px; grid-auto-rows: 39px; gap: 5px 6px; margin-top: -2px; }
.logo span { background: #000; color: #fff; border-radius: 5px; font-size: 20px; display: flex; align-items: center; justify-content: center; }
.site-nav { display: flex; gap: 66.500px; margin-left: 92px; font-size: 29.500px; margin-top: -8px; }
.hbtn { height: 75px; background: transparent; border: 4px solid #fff; border-radius: 9px; color: #fff; font-size: 29px; display: flex; align-items: center; justify-content: center; padding: 0; margin-top: -2px; }
.hbtn-create { width: 199px; margin-left: auto; gap: 17px; }
.caret { width: 29px; height: 16px; }
.hbtn-sign { width: 158px; margin-left: 13px; }
.help { width: 44px; height: 44px; border-radius: 50%; background: #fff; color: #4da9bc; font-size: 34px; font-weight: 800; display: flex; align-items: center; justify-content: center; margin-left: 32px; margin-right: 27px; margin-top: -2px; }

.site-body { flex: 1; padding: 42px 0 0 321px; }
.title { margin: 0; font-size: 63px; line-height: 74px; font-weight: 800; color: #7665a0; letter-spacing: .9px; }
.lead { margin: 22px 0 0; font-size: 26px; line-height: 36px; color: #333; letter-spacing: .63px; }
.actions { display: flex; align-items: stretch; margin-top: 22px; height: 80px; width: 2200px; gap: 21px; }
.btn { border-radius: 6px; font-size: 24px; padding: 0; }
.btn-primary { width: 257px; background: #f3a93c; border: 2px solid #bbbbbb; box-shadow: inset 0 4px 0 #fddcab; color: #fff; font-weight: 600; font-size: 26px; letter-spacing: 1px; }
.btn-secondary { width: 238px; background: #fff; border: 2px solid #bbbbbb; color: #5b6770; letter-spacing: .4px; }
.toggle { margin-left: auto; width: 168px; display: flex; border: 2px solid #949ba2; border-radius: 8px; overflow: hidden; box-shadow: 8px 4px 12px rgba(90, 100, 110, .25); background: #949ba2; gap: 4px; }
.toggle-a { width: 80px; background: #3f8fc4; display: grid; grid-template-columns: 12px 28px; grid-auto-rows: 6px; gap: 6px 4px; justify-content: center; align-content: center; }
.toggle-a i { border-radius: 3px; display: block; }
.w { background: #fff; }
.t { background: #a9dbe2; }
.toggle-b { flex: 1; background: #fff; display: flex; flex-direction: column; align-items: center; justify-content: center; gap: 6px; }
.bar { display: block; width: 44px; height: 6px; background: #4da9bc; border-radius: 1px; }
.box { display: block; width: 44px; height: 22px; background: #aedfe5; border-radius: 1px; }

.lessons { margin-top: 20px; width: 2200px; display: grid; grid-template-columns: 482px 1fr; grid-template-rows: 108px 108px; font-size: 24px; font-weight: 600; color: #5b6770; border: 2px solid #d6d6d6; border-top-color: #bbbbbb; border-left-color: #bbbbbb; }
.cell { display: flex; align-items: center; }
.cell-name { padding-left: 40px; border-right: 2px solid #d6d6d6; }
.cell-prog { padding-left: 40px; }
.cell-head { background: #ebebeb; }
.cell-row { background: #fcfcfc; }
.bubbles { display: flex; gap: 8px; margin-left: 4px; background: linear-gradient(#c6cacd, #c6cacd) center / 100% 20px no-repeat; }
.bubbles span { width: 68px; height: 68px; border-radius: 50%; background: #59ba3b; color: #fff; font-size: 32px; font-weight: 600; display: flex; align-items: center; justify-content: center; }

.legend-titles { display: grid; grid-template-columns: 301px 847px 1056px; margin: 133px 0 15px -2px; width: 2204px; }
.legend-titles h2 { margin: 0; text-align: center; font-size: 38px; line-height: 48px; font-weight: 500; color: #5b6770; letter-spacing: 1.400px; }
.legend { width: 2204px; margin-left: -2px; display: grid; grid-template-columns: 293px 843px 1052px; grid-template-rows: 80px 116px 192px; gap: 4px; padding: 0 4px 4px; background: #e5e6e8; font-size: 26px; color: #333; letter-spacing: .45px; }
.lg-head { grid-column: 1 / 4; display: grid; grid-template-columns: 293px 843px 1052px; gap: 4px; }
.lg-status-head { grid-column: 3; background: transparent !important; color: #5b6770; }
.lg-cell { background: #fff; display: flex; align-items: center; justify-content: center; }
.details { display: grid; grid-template-columns: 300px 270px 273px; grid-auto-rows: 77px; align-content: center; justify-items: center; align-items: center; }
.item { display: flex; align-items: center; gap: 8px; white-space: nowrap; }
.fa { width: 28px; height: 28px; flex: none; }
.status-grid { background: #fff; display: grid; grid-template-columns: 218px 222px 210px 402px; justify-items: center; align-items: center; }
.mark { width: 68px; height: 68px; }
.na { font-size: 26px; }
.dotm { width: 68px; height: 68px; border-radius: 50%; display: block; }
.dotm-empty { border: 4px solid #c6cacd; background: #fdfdfd; }
.dotm-prog { border: 4px solid #59ba3b; background: #fff; }
.dotm-done { background: #59ba3b; }
.dotm-assess { background: #7665a0; }

.site-footer { height: 56px; flex: none; background: #2a2e35; }

/* dock */
.dock { position: relative; margin: 4px 0 0 80px; width: 2720px; height: 119px; padding: 17px 0 0 17px; display: flex; align-items: flex-start; gap: 25.100px; border-radius: 30px; border: 2px solid rgba(215, 180, 160, .6); background: linear-gradient(90deg, #b09079, #ae8d76 30%, #b98b72 38%, #a58473 50%, #a68676 60%, #9f7f72 85%, #9c7a6e); }
.di { position: relative; width: 72px; height: 72px; flex: none; }
.ico { width: 72px; height: 72px; border-radius: 16px; overflow: hidden; box-shadow: 0 1px 2px rgba(60, 30, 10, .35); }
.ico svg { display: block; width: 72px; height: 72px; }
.ico-free { border-radius: 0; box-shadow: none; overflow: visible; }
.ico-free.ico-trash svg { height: 84px; width: 64px; margin: -6px 0 0 4px; }
.dot { position: absolute; left: 33px; top: 91px; width: 6px; height: 7px; border-radius: 50%; background: #2e0f02; }
.dock-sep { width: 2px; height: 88px; margin: -2px 8px 0; background: #6b4a3e; flex: none; }
.badge { position: absolute; top: -10px; height: 35px; border-radius: 18px; background: #e65444; color: #fff; font-size: 20px; display: flex; align-items: center; justify-content: center; }
.badge-msg { left: 50px; width: 34px; }
.badge-mail { left: 27px; width: 57px; }
.ic-280 { font-size: 12px; font-weight: 700; fill: #fff; text-anchor: middle; }
.ic-jan { font-size: 15px; font-weight: 500; fill: #fff; text-anchor: middle; }
.ic-24 { font-size: 39px; font-weight: 300; fill: #222; text-anchor: middle; }
.ic-tv { font-size: 30px; font-weight: 500; fill: #f4f4f4; }
.ic-quote { font-family: "Liberation Serif", serif; font-size: 44px; fill: #ea9a2a; text-anchor: middle; }
```
